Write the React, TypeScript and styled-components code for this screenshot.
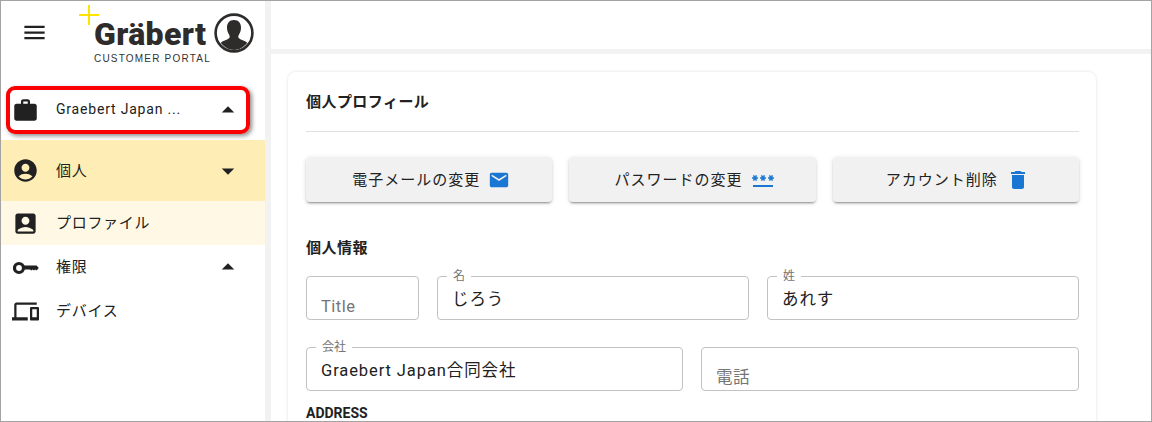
import { ReactNode } from 'react';
import styled, { createGlobalStyle } from 'styled-components';
import {
  MdAccountBox, MdAccountCircle, MdArrowDropDown, MdArrowDropUp, MdDelete,
  MdDevices, MdEmail, MdMenu, MdPassword, MdWork
} from 'react-icons/md';

const GlobalStyle = createGlobalStyle`
  html, body { margin: 0; padding: 0; background: #fff; }
  body { font-family: Roboto, "Noto Sans CJK JP", sans-serif; color: #212121; }
  * { box-sizing: border-box; }
`;

const Frame = styled.div`
  display: flex;
  width: 1152px;
  height: 422px;
  border: 1px solid #a3a3a3;
  overflow: hidden;
`;

const Sidebar = styled.aside`
  flex: 0 0 264px;
  background: #fff;
`;

const Brand = styled.header`
  display: flex;
  height: 87px;
  padding: 12px 0 0 20px;
`;

const MenuButton = styled.div`
  display: flex;
  height: 38px;
  align-items: center;
  font-size: 27px;
  color: #212121;
`;

const Logo = styled.div`
  position: relative;
  display: flex;
  align-items: flex-start;
  margin-left: 46px;
`;

const LogoPlus = styled.svg`
  position: absolute;
  left: -15px;
  top: -8px;
`;

const LogoWords = styled.div`
  display: flex;
  flex-direction: column;
  width: 120px;
  padding-top: 3px;
`;

const LogoName = styled.div`
  font-family: Roboto, sans-serif;
  font-weight: 900;
  font-size: 32px;
  line-height: 36px;
  letter-spacing: 0.35px;
  color: #2e2b2b;
`;

const LogoTag = styled.div`
  font-family: "Liberation Sans", sans-serif;
  font-size: 10px;
  line-height: 12px;
  margin-top: 1px;
  letter-spacing: 1.2px;
  white-space: nowrap;
  color: #333;
`;

const Row = styled.div<{ $height?: number; $tone?: string }>`
  position: relative;
  display: flex;
  align-items: center;
  height: ${({ $height }) => $height ?? 44}px;
  padding: 0 22px 0 11px;
  background: ${({ $tone }) => $tone ?? 'transparent'};
  font-size: 15px;
  letter-spacing: 0.7px;
  color: #212121;
`;

const AccountRow = styled(Row)`
  margin-bottom: 8px;
  font-size: 14px;
  letter-spacing: 0.8px;
`;

const RowIcon = styled.span`
  display: flex;
  align-items: center;
  justify-content: center;
  flex: 0 0 27px;
  margin-right: 17px;
  font-size: 27px;
`;

const RowLabel = styled.span`
  flex: 1;
  padding-bottom: 3px;
  white-space: nowrap;
`;

const RowArrow = styled.span`
  display: flex;
  font-size: 30px;
`;

const Highlight = styled.div`
  position: absolute;
  left: 5px;
  right: 15px;
  top: -2px;
  bottom: -2px;
  border: 4px solid #fa0000;
  border-radius: 9px;
  box-shadow: 2px 2px 4px rgba(0, 0, 0, 0.45);
`;

const Main = styled.main`
  display: flex;
  flex: 1;
  flex-direction: column;
  padding-left: 6px;
  background: #f2f2f2;
`;

const TopBar = styled.div`
  flex: 0 0 48px;
  margin-bottom: 5px;
  background: #fff;
`;

const Content = styled.div`
  flex: 1;
  padding: 18px 55px 0 17px;
  background: #fff;
  overflow: hidden;
`;

const Card = styled.section`
  height: 400px;
  padding: 0 17px 0 18px;
  border-radius: 8px;
  background: #fff;
  box-shadow: 0 0 3px rgba(0, 0, 0, 0.14);
`;

const CardTitle = styled.h2`
  margin: 0;
  height: 60px;
  border-bottom: 1px solid #e0e0e0;
  font-size: 15px;
  font-weight: 700;
  letter-spacing: 0.45px;
  line-height: 61px;
`;

const Actions = styled.div`
  display: grid;
  grid-template-columns: repeat(3, 1fr);
  gap: 17px;
  margin-top: 25px;
`;

const ActionButton = styled.button`
  display: flex;
  align-items: center;
  justify-content: center;
  gap: 8px;
  height: 45px;
  padding: 0 0 0 4px;
  border: 0;
  border-radius: 4px;
  background: #f1f1f1;
  box-shadow: 0 3px 1px -2px rgba(0, 0, 0, 0.2), 0 2px 2px 0 rgba(0, 0, 0, 0.14), 0 1px 5px 0 rgba(0, 0, 0, 0.12);
  font: inherit;
  font-size: 15px;
  letter-spacing: 1px;
  color: #212121;

  span {
    padding-bottom: 3px;
  }

  svg {
    font-size: 24px;
    color: #1976d2;
  }
`;

const SectionTitle = styled.h3<{ $gap: number; $size: number }>`
  margin: ${({ $gap }) => $gap}px 0 0;
  font-size: ${({ $size }) => $size}px;
  font-weight: 700;
  letter-spacing: ${({ $size }) => ($size > 14 ? 0.5 : 0)}px;
  line-height: 20px;
`;

const FieldRow = styled.div<{ $columns: string; $gap: number }>`
  display: grid;
  grid-template-columns: ${({ $columns }) => $columns};
  column-gap: 18px;
  margin-top: ${({ $gap }) => $gap}px;
`;

const FieldBox = styled.fieldset<{ $empty: boolean }>`
  min-width: 0;
  height: 44px;
  margin: 0;
  padding: ${({ $empty }) => ($empty ? 20 : 13)}px 14px 0;
  border: 1px solid #c2c2c2;
  border-radius: 4px;
`;

const FieldLegend = styled.legend`
  height: 1px;
  margin-left: -5px;
  padding: 0 6px;
  font-size: 12px;
  line-height: 1px;
  color: #757575;
`;

const FieldValue = styled.div<{ $empty: boolean }>`
  font-size: 16.5px;
  letter-spacing: ${({ $empty }) => ($empty ? 0.5 : 0.9)}px;
  line-height: 20px;
  white-space: nowrap;
  color: ${({ $empty }) => ($empty ? '#757575' : '#212121')};
`;

const KeyGlyph = styled.svg`
  margin-top: 2px;
`;

const Field = ({ label, value }: { label: string; value?: string }): JSX.Element => (
  <FieldBox $empty={!value}>
    {value && <FieldLegend>{label}</FieldLegend>}
    <FieldValue $empty={!value}>{value ?? label}</FieldValue>
  </FieldBox>
);

const KeyIcon = (): JSX.Element => (
  <KeyGlyph width="26" height="14" viewBox="0 0 26 14">
    <circle cx="6" cy="7" r="4.5" fill="none" stroke="#212121" strokeWidth="3.2" />
    <path d="M10 4.500h13.600l2.200 2.500-2.200 2.500-1.400-1.100-1.300 1.100-1.300-1.100-1.300 1.100-1.300-1.100H10z" fill="#212121" />
  </KeyGlyph>
);

const NavRow = (
  { icon, label, arrow, height, tone }: {
    icon: ReactNode; label: string; arrow?: ReactNode; height?: number; tone?: string;
  }
): JSX.Element => (
  <Row $height={height} $tone={tone}>
    <RowIcon>{icon}</RowIcon>
    <RowLabel>{label}</RowLabel>
    {arrow && <RowArrow>{arrow}</RowArrow>}
  </Row>
);

const App = (): JSX.Element => (
  <>
    <GlobalStyle />
    <Frame>
      <Sidebar>
        <Brand>
          <MenuButton><MdMenu /></MenuButton>
          <Logo>
            <LogoPlus width="20" height="20" viewBox="0 0 20 20">
              <path d="M10 0v20M0 10h20" stroke="#ffe400" strokeWidth="2" fill="none" />
            </LogoPlus>
            <LogoWords>
              <LogoName>Gräbert</LogoName>
              <LogoTag>CUSTOMER PORTAL</LogoTag>
            </LogoWords>
            <svg width="40" height="40" viewBox="0 0 40 40">
              <circle cx="20" cy="20" r="18.4" fill="#fff" stroke="#2e2b2b" strokeWidth="2.6" />
              <path
                d="M20 7c-4.6 0-7.2 3.4-7 8 .1 2.400.8 4.600 2 6.400.7 1.100 1 2.600.3 3.600-1.500 1.700-6.300 2.600-8.500 4.800C10.200 34.500 14.900 37 20 37s9.800-2.500 13.200-7.200c-2.200-2.200-7-3.100-8.500-4.800-.7-1-.4-2.500.3-3.600 1.200-1.800 1.900-4 2-6.400.2-4.600-2.400-8-7-8z"
                fill="#2e2b2b"
              />
            </svg>
          </Logo>
        </Brand>
        <AccountRow>
          <RowIcon><MdWork /></RowIcon>
          <RowLabel>Graebert Japan ...</RowLabel>
          <RowArrow><MdArrowDropUp /></RowArrow>
          <Highlight />
        </AccountRow>
        <NavRow icon={<MdAccountCircle />} label="個人" arrow={<MdArrowDropDown />} height={61} tone="#feeeb6" />
        <NavRow icon={<MdAccountBox />} label="プロファイル" tone="#fff8e4" />
        <NavRow icon={<KeyIcon />} label="権限" arrow={<MdArrowDropUp />} />
        <NavRow icon={<MdDevices />} label="デバイス" />
      </Sidebar>
      <Main>
        <TopBar />
        <Content>
          <Card>
            <CardTitle>個人プロフィール</CardTitle>
            <Actions>
              <ActionButton><span>電子メールの変更</span><MdEmail size={22} /></ActionButton>
              <ActionButton><span>パスワードの変更</span><MdPassword /></ActionButton>
              <ActionButton><span>アカウント削除</span><MdDelete /></ActionButton>
            </Actions>
            <SectionTitle $gap={36} $size={15}>個人情報</SectionTitle>
            <FieldRow $columns="113px 1fr 1fr" $gap={18}>
              <Field label="Title" />
              <Field label="名" value="じろう" />
              <Field label="姓" value="あれす" />
            </FieldRow>
            <FieldRow $columns="377px 1fr" $gap={27}>
              <Field label="会社" value="Graebert Japan合同会社" />
              <Field label="電話" />
            </FieldRow>
            <SectionTitle $gap={12} $size={14}>ADDRESS</SectionTitle>
          </Card>
        </Content>
      </Main>
    </Frame>
  </>
);

export default App;
